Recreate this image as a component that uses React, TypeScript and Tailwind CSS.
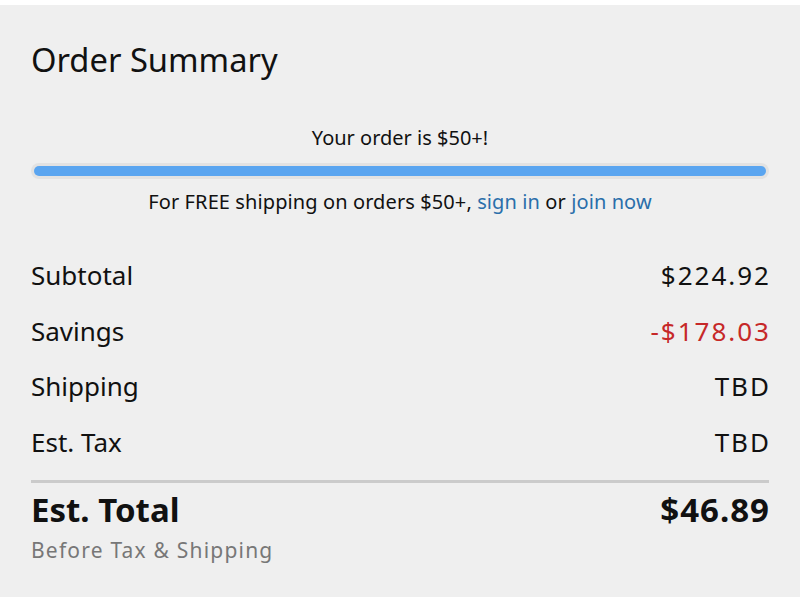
const rows = [
  { label: 'Subtotal', value: '$224.92', red: false },
  { label: 'Savings', value: '-$178.03', red: true },
  { label: 'Shipping', value: 'TBD', red: false },
  { label: 'Est. Tax', value: 'TBD', red: false },
];

export default function App() {
  return (
    <div className="min-h-[597px] bg-white pt-[5px]" style={{ fontFamily: '"Noto Sans", sans-serif' }}>
      <div className="min-h-[592px] bg-[#efefef] px-[31px] text-[#111]">
        <h1 className="pt-[31px] text-[32.7px] leading-[48px]">Order Summary</h1>

        <p className="mt-[40px] text-center text-[20px] leading-[28px]">Your order is $50+!</p>
        <div className="mt-[11px] rounded-full bg-[#e2e2e2] p-[3px]">
          <div className="h-[10px] rounded-full bg-[#5aa5f0]" />
        </div>
        <p className="mt-[8px] text-center text-[20px] leading-[30px] tracking-[0.1px]">
          For FREE shipping on orders $50+, <span className="text-[#2a6eaa]">sign in</span> or{' '}
          <span className="text-[#2a6eaa]">join now</span>
        </p>

        <div className="mt-[31px]">
          {rows.map((r) => (
            <div key={r.label} className="flex items-center justify-between text-[26px] leading-[55.5px]">
              <span>{r.label}</span>
              <span className={r.red ? '-mr-[2px] tracking-[2px] text-[#c62828]' : '-mr-[2px] tracking-[2px]'}>
                {r.value}
              </span>
            </div>
          ))}
        </div>

        <div className="mt-[10px] h-[3px] bg-[#cbcbcb]" />
        <div className="mt-[6px] flex items-center justify-between text-[33px] font-bold leading-[42px]">
          <span>Est. Total</span>
          <span className="-mr-[1px] tracking-[1px]">$46.89</span>
        </div>
        <p className="text-[21px] leading-[38px] tracking-[1.2px] text-[#777]">Before Tax &amp; Shipping</p>
      </div>
    </div>
  );
}
